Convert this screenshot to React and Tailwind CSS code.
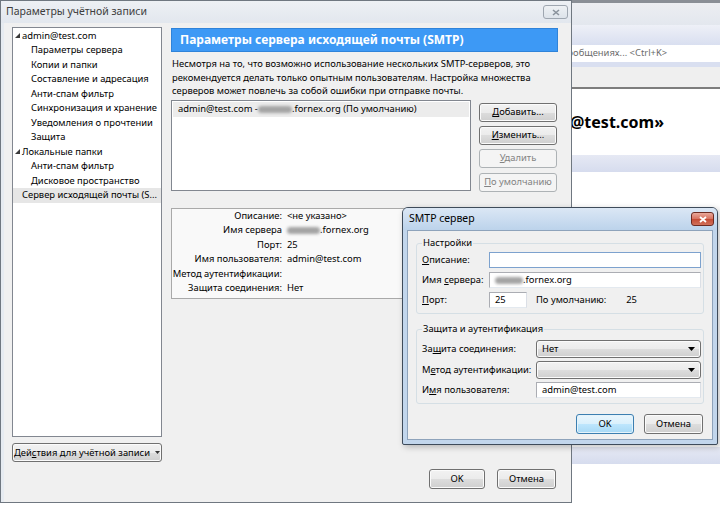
import React from 'react';

const btnBase = 'flex items-center rounded-[3px] border text-[9.4px] leading-none whitespace-nowrap';
const btnNormal =
  'border-[#707070] bg-[linear-gradient(#f2f2f2,#ebebeb_50%,#dddddd_50%,#cfcfcf)] shadow-[inset_0_0_0_1px_#fbfbfb] text-black';
const btnDisabled = 'border-[#adb2b5] bg-[#f4f4f4] text-[#838383]';
const btnFocused =
  'border-[#3c7fb1] bg-[linear-gradient(#eaf6fd,#d9f0fc_50%,#bee6fd_50%,#a7d9f5)] shadow-[inset_0_0_0_1px_#e4f3fb] text-black';

function Btn({ children, className = '', disabled, focused }) {
  const tone = disabled ? btnDisabled : focused ? btnFocused : btnNormal;
  return <div className={`${btnBase} justify-center ${tone} ${className}`}>{children}</div>;
}

function Smudge({ w = 32 }) {
  return (
    <span
      className="inline-block h-[7px] bg-[#a4a4a4] rounded-full blur-[1.5px] align-middle"
      style={{ width: w }}
    />
  );
}

function Expander() {
  return (
    <svg width="5" height="5" viewBox="0 0 5 5" className="shrink-0">
      <polygon points="5,0 5,5 0,5" fill="#3a3a3a" />
    </svg>
  );
}

const tree = [
  { label: 'admin@test.com', root: true },
  { label: 'Параметры сервера' },
  { label: 'Копии и папки' },
  { label: 'Составление и адресация' },
  { label: 'Анти-спам фильтр' },
  { label: 'Синхронизация и хранение' },
  { label: 'Уведомления о прочтении' },
  { label: 'Защита' },
  { label: 'Локальные папки', root: true },
  { label: 'Анти-спам фильтр' },
  { label: 'Дисковое пространство' },
  { label: 'Сервер исходящей почты (S...', top: true, selected: true },
];

const details = [
  ['Описание:', '<не указано>'],
  ['Имя сервера', 'blur'],
  ['Порт:', '25'],
  ['Имя пользователя:', 'admin@test.com'],
  ['Метод аутентификации:', ''],
  ['Защита соединения:', 'Нет'],
];

function Combo({ value }) {
  return (
    <div className={`${btnBase} ${btnNormal} justify-between h-[18px] flex-1 pl-[5px] pr-[5px]`}>
      <span>{value}</span>
      <svg width="7" height="4" viewBox="0 0 7 4">
        <polygon points="0,0 7,0 3.5,4" fill="#000" />
      </svg>
    </div>
  );
}

const field = 'border border-[#abadb3] border-b-[#e3e9ef] border-r-[#dbdfe6] bg-white';

export default function App() {
  return (
    <div className="relative w-[720px] h-[505px] overflow-hidden bg-white font-['Noto_Sans',sans-serif] text-[9.4px] text-black">
      {/* Background mail window */}
      <div className="absolute inset-0 flex flex-col">
        <div className="h-[3px] bg-[#8a8f96]" />
        <div className="h-[22px] bg-linear-to-b from-[#eceef2] to-[#e3e7ee]" />
        <div className="h-[20px] bg-linear-to-b from-[#eef0f7] to-[#d9dff0]" />
        <div className="h-[17px] bg-white flex items-center pl-[563px] text-[#6d6d6d]">
          сообщениях... &lt;Ctrl+K&gt;
        </div>
        <div className="h-[5px] bg-[#d9dff0]" />
        <div className="h-[20px] bg-[#efefef]" />
        <div className="h-[2px] bg-[#7d7d7d]" />
        <div className="h-[66px] bg-white flex items-center">
          <div className="w-[664px] text-right text-[16px] font-bold leading-none">
            Учётная запись «admin@test.com»
          </div>
        </div>
        <div className="h-[17px] bg-linear-to-b from-[#e6e9f4] to-[#d6dcee]" />
        <div className="h-[275px] bg-white" />
        <div className="h-[17px] bg-linear-to-b from-[#e6e9f4] to-[#d6dcee]" />
        <div className="flex-1 bg-white" />
      </div>

      {/* Account settings window */}
      <div className="absolute left-0 top-0 w-[572px] h-[503px] flex flex-col border border-[#6f7780] bg-[#f0f0f0]">
        <div className="h-[22px] shrink-0 flex items-center justify-between pl-[5px] pr-[3px] bg-linear-to-b from-[#edf0f4] to-[#e2e7ee] text-[10.5px] text-[#3d3d3d]">
          <span>Параметры учётной записи</span>
          <div className="w-[25px] h-[14px] flex items-center justify-center rounded-[3px] border border-[#9ea6b0] bg-linear-to-b from-[#eef1f4] to-[#dde3ea]">
            <svg width="8" height="7" viewBox="0 0 8 7">
              <path d="M1 1 L7 6 M7 1 L1 6" stroke="#8a929c" strokeWidth="1.6" />
            </svg>
          </div>
        </div>

        <div className="flex-1 flex gap-[9px] pl-[8px] pr-[13px] pt-[4px] pb-[13px] border-l-[3px] border-[#e6ebf1]">
          {/* Left column */}
          <div className="w-[150px] flex flex-col">
            <div className="h-[410px] border border-[#828790] bg-white pt-[0.5px]">
              {tree.map((t, i) => (
                <div
                  key={i}
                  className={`h-[14.5px] flex items-center whitespace-nowrap ${
                    t.root ? 'pl-[2px] gap-[2px]' : t.top ? 'pl-[9px]' : 'pl-[18px]'
                  } ${t.selected ? 'bg-[#e6e6e6]' : ''}`}
                >
                  {t.root && <Expander />}
                  <span>{t.label}</span>
                </div>
              ))}
            </div>
            <Btn className="mt-[6px] h-[19px] gap-[5px]">
              <span>
                Дей<u>с</u>твия для учётной записи
              </span>
              <svg width="5" height="3" viewBox="0 0 5 3">
                <polygon points="0,0 5,0 2.5,3" fill="#333" />
              </svg>
            </Btn>
          </div>

          {/* Right column */}
          <div className="w-[387px] flex flex-col">
            <div className="mt-[1px] h-[24px] flex items-center pl-[8px] bg-[#3d99f5] border border-[#2f83d9] text-white text-[12px] font-bold">
              Параметры сервера исходящей почты (SMTP)
            </div>
            <p className="mt-[5px] leading-[13.5px] pl-[1px] whitespace-nowrap">
              Несмотря на то, что возможно использование нескольких SMTP-серверов, это
              <br />
              рекомендуется делать только опытным пользователям. Настройка множества
              <br />
              серверов может повлечь за собой ошибки при отправке почты.
            </p>
            <div className="mt-[2px] flex gap-[8px]">
              <div className="w-[300px] h-[91px] border border-[#828790] bg-white p-[1px]">
                <div className="h-[15px] flex items-center pl-[5px] bg-[#ececec] whitespace-nowrap">
                  admin@test.com -<Smudge w={34} />.fornex.org (По умолчанию)
                </div>
              </div>
              <div className="w-[78px] flex flex-col gap-[4px] pt-[3px]">
                <Btn className="h-[19px]">
                  <span><u>Д</u>обавить...</span>
                </Btn>
                <Btn className="h-[19px]">
                  <span><u>И</u>зменить...</span>
                </Btn>
                <Btn disabled className="h-[19px]">
                  <span><u>У</u>далить</span>
                </Btn>
                <Btn disabled className="h-[19px] mt-[1px]">
                  <span><u>П</u>о умолчанию</span>
                </Btn>
              </div>
            </div>
            <div className="mt-[16px] h-[91px] border border-[#a9a9a9] bg-[#f9f9f9] grid grid-cols-[110px_1fr] gap-x-[5px] content-start">
              {details.map(([k, v], i) => (
                <React.Fragment key={i}>
                  <div className="h-[14.5px] flex items-center justify-end whitespace-nowrap">{k}</div>
                  <div className="h-[14.5px] flex items-center whitespace-nowrap">
                    {v === 'blur' ? (
                      <>
                        <Smudge w={33} />.fornex.org
                      </>
                    ) : (
                      v
                    )}
                  </div>
                </React.Fragment>
              ))}
            </div>
            <div className="mt-auto flex justify-end gap-[12px] pr-[2px]">
              <Btn className="w-[56px] h-[20px]">OK</Btn>
              <Btn className="w-[59px] h-[20px]">Отмена</Btn>
            </div>
          </div>
        </div>
      </div>

      {/* SMTP server dialog */}
      <div className="absolute left-[402px] top-[207px] w-[316px] h-[238px] flex flex-col rounded-t-[6px] rounded-b-[2px] border border-[#3e4b5a] bg-[#c2d6ec] shadow-[2px_2px_6px_rgba(0,0,0,0.25)]">
        <div className="h-[22px] shrink-0 flex items-center justify-between pl-[6px] pr-[3px] rounded-t-[5px] bg-linear-to-b from-[#dbe7f5] to-[#bcd3eb] text-[10.5px]">
          <span>SMTP сервер</span>
          <div className="w-[23px] h-[14px] flex items-center justify-center rounded-[3px] border border-[#6d2b22] bg-[linear-gradient(#e9a99b,#d7705e_50%,#c44a33_50%,#d0705a)]">
            <svg width="8" height="7" viewBox="0 0 8 7">
              <path d="M1 1 L7 6 M7 1 L1 6" stroke="#fff" strokeWidth="1.8" />
            </svg>
          </div>
        </div>
        <div className="flex-1 mx-[4px] mb-[4px] border border-[#8ea3bb] bg-[#f0f0f0] pt-[5px] px-[8px] flex flex-col">
          <fieldset className="border border-[#d5dfe5] rounded-[3px] pl-[5px] pr-[2px] pb-[5px]">
            <legend className="px-[1px] leading-[14px]">Настройки</legend>
            <div className="mt-[2px] flex flex-col gap-[4px]">
              <div className="flex items-center whitespace-nowrap">
                <span className="w-[67px] shrink-0"><u>О</u>писание:</span>
                <div className="flex-1 h-[16px] border border-[#7da2ce] bg-white" />
              </div>
              <div className="flex items-center whitespace-nowrap">
                <span className="w-[67px] shrink-0">Имя <u>с</u>ервера:</span>
                <div className={`flex-1 h-[16px] flex items-center pl-[5px] ${field}`}>
                  <Smudge w={28} />.fornex.org
                </div>
              </div>
              <div className="flex items-center whitespace-nowrap">
                <span className="w-[67px] shrink-0"><u>П</u>орт:</span>
                <div className={`w-[38px] h-[16px] flex items-center pl-[5px] ${field}`}>25</div>
                <span className="ml-[9px]">По умолчанию:</span>
                <span className="ml-[20px]">25</span>
              </div>
            </div>
          </fieldset>
          <fieldset className="mt-[8px] border border-[#d5dfe5] rounded-[3px] pl-[5px] pr-[2px] pb-[5px]">
            <legend className="px-[1px] leading-[14px]">Защита и аутентификация</legend>
            <div className="mt-[4px] flex flex-col gap-[3px]">
              <div className="flex items-center whitespace-nowrap">
                <span className="w-[114px] shrink-0">За<u>щ</u>ита соединения:</span>
                <Combo value="Нет" />
              </div>
              <div className="flex items-center whitespace-nowrap">
                <span className="w-[114px] shrink-0">М<u>е</u>тод аутентификации:</span>
                <Combo value="" />
              </div>
              <div className="flex items-center whitespace-nowrap">
                <span className="w-[114px] shrink-0">И<u>м</u>я пользователя:</span>
                <div className={`flex-1 h-[16px] flex items-center pl-[5px] ${field}`}>admin@test.com</div>
              </div>
            </div>
          </fieldset>
          <div className="mt-[10px] flex justify-end gap-[10px] pr-[1px]">
            <Btn focused className="w-[58px] h-[20px]">OK</Btn>
            <Btn className="w-[59px] h-[20px]">Отмена</Btn>
          </div>
        </div>
      </div>
    </div>
  );
}
